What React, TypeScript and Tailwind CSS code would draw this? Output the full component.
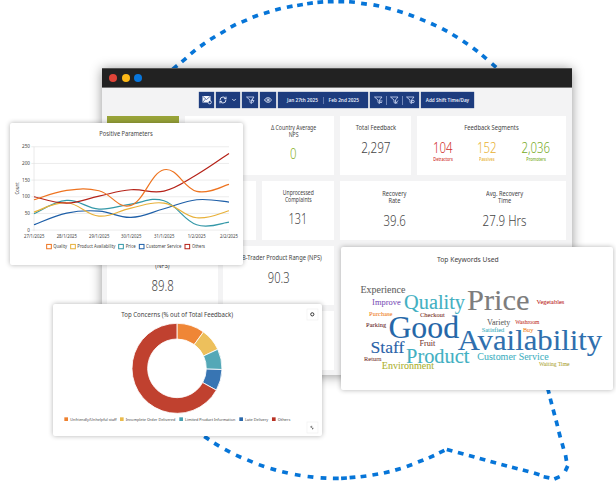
import React from "react";
import { ChevronDown, Eye, RefreshCw } from "lucide-react";

const SANS = "font-['Noto_Sans','Open_Sans',sans-serif]";

type Pt = [number, number];

const topArc: Pt[] = [
  [175, 67.3], [184, 60], [193, 52], [202.7, 44.7], [212.7, 38], [223, 32], [233.3, 25.8], [244.3, 21],
  [255.3, 16.3], [266.7, 12.7], [278, 9.3], [289.7, 6.7], [300, 5], [310, 3.3], [320.3, 2.1], [330.7, 1.7],
  [341.3, 1.7], [352, 2], [364, 3.7], [376.3, 5.4], [388, 8.3], [400, 11.6], [411.3, 15.4], [422.7, 20],
  [433.7, 24.7], [444.7, 30], [455, 36], [465.3, 42.7], [475.3, 49.7], [484.3, 57], [494, 65.5],
];

const bottomArc: Pt[] = [
  [206.7, 438], [216.7, 444.6], [227.5, 450.7], [238.6, 456.3], [250, 461], [261.5, 465.6], [273.3, 469.3],
  [285, 472.4], [297.7, 475], [310.5, 476.8], [323.5, 478], [335.8, 478.4], [344, 478.2], [352.5, 477.4], [363.5, 476.4],
  [375.3, 474.5], [386.7, 472.3], [398, 469.3], [409.5, 465.6], [420.7, 461], [431.5, 456.7], [441.8, 451.6],
];

const tail: Pt[] = [
  [449.6, 450.2], [460.7, 453.3], [471.7, 456.2], [482.5, 459.3], [493.3, 462.3], [504.2, 465.2], [514.8, 468],
  [525.6, 470.8], [536.7, 473.8], [546.5, 477.3], [557, 477.8], [566.5, 468.5], [566, 458], [562.8, 446],
  [559.6, 434.6], [556.8, 423.3], [553.9, 412.4], [551, 401.4], [548.4, 391],
];

function Dashes({ points }: { points: Pt[] }) {
  return (
    <g stroke="#0675d8" strokeWidth={3.7}>
      {points.map(([x, y], i) => {
        const a = points[Math.max(0, i - 1)];
        const b = points[Math.min(points.length - 1, i + 1)];
        const len = Math.hypot(b[0] - a[0], b[1] - a[1]);
        const dx = ((b[0] - a[0]) / len) * 2.9;
        const dy = ((b[1] - a[1]) / len) * 2.9;
        return <line key={i} x1={x - dx} y1={y - dy} x2={x + dx} y2={y + dy} />;
      })}
    </g>
  );
}

function Funnel({ children }: { children?: React.ReactNode }) {
  return (
    <svg viewBox="0 0 18 18" className="h-[9px] w-[9px]" fill="none" stroke="#dbe4ff" strokeWidth={1.5} strokeLinejoin="round">
      <path d="M1 2h15l-5 6v7l-3-2V8z" />
      {children}
    </svg>
  );
}

const btn = "flex h-[16px] shrink-0 items-center justify-center bg-[#1d3c7e] text-[#e6ecfa] shadow-[0_0_1px_#1d3c7e]";

function Toolbar() {
  return (
    <div className="flex h-[28px] items-start gap-[2px] pl-[97px] pt-[4px]">
      <div className={`${btn} w-[15px]`}>
        <svg viewBox="0 0 20 20" className="h-[10px] w-[10px]">
          <path d="M1 2h16v13H1z" fill="#f4f6fc" />
          <path d="M2 3l7 6 7-6M2 14l5-6" stroke="#1d3c7e" strokeWidth={1.3} fill="none" />
          <circle cx={15.5} cy={14.5} r={3.2} fill="#1d3c7e" stroke="#f4f6fc" strokeWidth={1.6} />
        </svg>
      </div>
      <div className={`${btn} w-[24px] gap-[4px]`}>
        <RefreshCw size={8} strokeWidth={2.8} />
        <ChevronDown size={6} strokeWidth={3.4} />
      </div>
      <div className={`${btn} w-[16px]`}>
        <Funnel><path d="M14 5l-2 4h4l-3 5" /></Funnel>
      </div>
      <div className={`${btn} w-[16px]`}><Eye size={8} strokeWidth={2.6} /></div>
      <div className={`${btn} w-[90px]`}>
        <div className="flex origin-center scale-x-[.82] items-center gap-[6px] whitespace-nowrap text-[5.8px] font-semibold">
          <span>Jan 27th 2025</span>
          <span className="h-[7px] w-px bg-[#7187b8]" />
          <span>Feb 2nd 2025</span>
        </div>
      </div>
      <div className={`${btn} w-[49px] gap-[3px]`}>
        <Funnel><path d="M12 10h5M12 13h4" /></Funnel>
        <span className="h-[9px] w-px bg-[#7187b8]" />
        <Funnel><path d="M12 14l4-5M12 14h3" /></Funnel>
        <span className="h-[9px] w-px bg-[#7187b8]" />
        <Funnel><circle cx={14} cy={11} r={2.5} /></Funnel>
      </div>
      <div className={`${btn} w-[53px]`}>
        <span className="scale-x-[.76] whitespace-nowrap text-[6.1px] font-semibold">Add Shift Time/Day</span>
      </div>
    </div>
  );
}

function Title({ children, className = "scale-x-[.9]" }: { children: React.ReactNode; className?: string }) {
  return <div className={`origin-center whitespace-nowrap text-center text-[6.3px] leading-[7.2px] text-[#444] ${className}`}>{children}</div>;
}

function Num({ children, className = "scale-x-[.76] text-[#444]" }: { children: React.ReactNode; className?: string }) {
  return <div className={`origin-center whitespace-nowrap text-center text-[15px] font-light leading-[16px] ${className}`}>{children}</div>;
}

function Segment({ value, label, className }: { value: string; label: string; className: string }) {
  return (
    <div className={`flex w-[40px] flex-col items-center ${className}`}>
      <Num className="scale-x-[.76]">{value}</Num>
      <div className="mt-[1px] scale-x-[.88] whitespace-nowrap text-[4.4px] font-medium leading-[6px]">{label}</div>
    </div>
  );
}

function BrowserWindow() {
  return (
    <div className="absolute left-[102px] top-[68px] h-[307px] w-[470px] bg-[#f3f3f4] shadow-[0_1px_11px_rgba(0,0,0,0.42)]">
      <div className="flex h-[20px] items-center gap-[4.6px] border-b border-t border-b-[#777] border-t-[#555] bg-[#222] pl-[7.3px]">
        <span className="h-[8px] w-[8px] rounded-full bg-[#e04438]" />
        <span className="h-[8px] w-[8px] rounded-full bg-[#fcb817]" />
        <span className="h-[8px] w-[8px] rounded-full bg-[#0876dc]" />
      </div>
      <Toolbar />
      <div className="flex flex-col gap-[6px] pl-[5px] pr-[6px]">
        <div className="flex h-[59px] gap-[6px]">
          <div className="w-[72px] bg-[#98a338]" />
          <div className="flex w-[149px] flex-col items-center bg-white pl-[68px] pt-[8px]">
            <Title className="scale-x-[.82]">Δ Country Average<br />NPS</Title>
            <Num className="mt-[7px] scale-x-[.76] text-[#86b01c]">0</Num>
          </div>
          <div className="flex w-[71px] flex-col items-center bg-white pt-[8px]">
            <Title className="scale-x-[.92]">Total Feedback</Title>
            <Num className="mt-[8px] scale-x-[.78] text-[#444]">2,297</Num>
          </div>
          <div className="w-[149px] bg-white pt-[8px]">
            <Title className="scale-x-[.92]">Feedback Segments</Title>
            <div className="mt-[8px] flex pl-[6px]">
              <Segment value="104" label="Detractors" className="text-[#cf2e2a]" />
              <div className="w-[4px]" />
              <Segment value="152" label="Passives" className="text-[#e8b030]" />
              <div className="w-[9px]" />
              <Segment value="2,036" label="Promoters" className="text-[#76aa25]" />
            </div>
          </div>
        </div>
        <div className="flex h-[59px] gap-[6px]">
          <div className="w-[149px] bg-white" />
          <div className="flex w-[72px] flex-col items-center bg-white pt-[8px]">
            <Title className="scale-x-[.8]">Unprocessed<br />Complaints</Title>
            <Num className="mt-[7px] scale-x-[.72] text-[#444]">131</Num>
          </div>
          <div className="flex w-[226px] bg-white pt-[9px]">
            <div className="flex w-[109px] flex-col items-center">
              <Title>Recovery<br />Rate</Title>
              <Num className="mt-[8px] scale-x-[.76] text-[#444]">39.6</Num>
            </div>
            <div className="flex w-[111px] flex-col items-center">
              <Title>Avg. Recovery<br />Time</Title>
              <Num className="mt-[8px] scale-x-[.77] text-[#444]">27.9 Hrs</Num>
            </div>
          </div>
        </div>
        <div className="flex h-[59px] gap-[5px]">
          <div className="flex w-[111px] flex-col items-center bg-white pt-[9px]">
            <Title>Trader Product Quality<br />(NPS)</Title>
            <Num className="mt-[8px] scale-x-[.76] text-[#444]">89.8</Num>
          </div>
          <div className="flex w-[111px] flex-col items-center bg-white pt-[8px]">
            <div className="pl-[7px]">
              <Title className="scale-x-[.91]">B-Trader Product Range (NPS)</Title>
            </div>
            <Num className="mt-[8px] scale-x-[.74] text-[#444]">90.3</Num>
          </div>
        </div>
        <div className="h-[59px] w-[227px] bg-white" />
      </div>
    </div>
  );
}

const panel = "absolute rounded-[2px] bg-white shadow-[0_0_5px_rgba(0,0,0,0.3)]";

const xs = [102, 200, 297, 393, 492, 590, 687];

const series = [
  { name: "Customer Service", color: "#1e5fa8", ys: [343, 308, 302, 321, 295, 268, 275] },
  { name: "Price", color: "#3498a8", ys: [310, 270, 296, 281, 271, 343, 335] },
  { name: "Product Availability", color: "#e8b13a", ys: [305, 277, 317, 293, 278, 322, 301] },
  { name: "Others", color: "#b52218", ys: [259, 278, 257, 238, 242, 193, 129] },
  { name: "Quality", color: "#ee7420", ys: [268, 240, 241, 285, 178, 243, 222] },
];

function smooth(ys: number[]) {
  const at = (i: number): Pt => {
    const k = Math.max(0, Math.min(xs.length - 1, i));
    return [xs[k], ys[k]];
  };
  let d = `M${xs[0]} ${ys[0]}`;
  for (let i = 0; i < xs.length - 1; i++) {
    const [p0, p1, p2, p3] = [at(i - 1), at(i), at(i + 1), at(i + 2)];
    const t = 0.2;
    d += ` C${p1[0] + (p2[0] - p0[0]) * t} ${p1[1] + (p2[1] - p0[1]) * t} ${p2[0] - (p3[0] - p1[0]) * t} ${p2[1] - (p3[1] - p1[1]) * t} ${p2[0]} ${p2[1]}`;
  }
  return d;
}

const lineLegend = [
  { x: 140, tx: 160, w: 41, label: "Quality", color: "#ee7420" },
  { x: 212, tx: 232, w: 114, label: "Product Availability", color: "#e8b13a" },
  { x: 356, tx: 377, w: 30, label: "Price", color: "#3498a8" },
  { x: 418, tx: 438, w: 106, label: "Customer Service", color: "#1e5fa8" },
  { x: 555, tx: 576, w: 39, label: "Others", color: "#b52218" },
];

function LineChart() {
  return (
    <div className={`${panel} left-[10px] top-[122.5px] h-[142.5px] w-[233px]`}>
      <svg viewBox="30 38 699 427" className={`h-full w-full ${SANS}`} fill="#444">
        <text x={298} y={78} fontSize={19} textLength={160} lengthAdjust="spacingAndGlyphs">Positive Parameters</text>
        {[250, 200, 150, 100, 50, 0].map((v, i) => (
          <g key={v}>
            <line x1={94} x2={687} y1={109 + i * 50} y2={109 + i * 50} stroke="#ececec" strokeWidth={3} />
            <text x={90} y={114 + i * 50} fontSize={14} textAnchor="end">{v}</text>
          </g>
        ))}
        <line x1={102} x2={102} y1={109} y2={362} stroke="#e0e0e0" strokeWidth={2} />
        <text transform="translate(56 252) rotate(-90)" fontSize={14} textLength={36} lengthAdjust="spacingAndGlyphs">Count</text>
        {["27/1/2025", "28/1/2025", "29/1/2025", "30/1/2025", "31/1/2025", "1/2/2025", "2/2/2025"].map((d, i) => (
          <text key={d} x={xs[i] - (i > 4 ? 27 : 30)} y={384} fontSize={13.5} textLength={i > 4 ? 54 : 61} lengthAdjust="spacingAndGlyphs">{d}</text>
        ))}
        {series.map((s) => (
          <path key={s.name} d={smooth(s.ys)} fill="none" stroke={s.color} strokeWidth={3.6} />
        ))}
        {lineLegend.map((l) => (
          <g key={l.label}>
            <rect x={l.x} y={402} width={14} height={13} fill="#fff" stroke={l.color} strokeWidth={3} />
            <text x={l.tx} y={413} fontSize={14.5} textLength={l.w} lengthAdjust="spacingAndGlyphs">{l.label}</text>
          </g>
        ))}
      </svg>
    </div>
  );
}

const slices = [
  { from: 0, to: 36, color: "#ef8636" },
  { from: 36, to: 65, color: "#edc05c" },
  { from: 65, to: 91.5, color: "#54a8b7" },
  { from: 91.5, to: 119, color: "#3875b3" },
  { from: 119, to: 360, color: "#c0412f" },
];

function arc(from: number, to: number) {
  const p = (deg: number, r: number) => {
    const a = (deg * Math.PI) / 180;
    return `${410 + r * Math.sin(a)} ${399 - r * Math.cos(a)}`;
  };
  const big = to - from > 180 ? 1 : 0;
  return `M${p(from, 135)} A135 135 0 ${big} 1 ${p(to, 135)} L${p(to, 88)} A88 88 0 ${big} 0 ${p(from, 88)}Z`;
}

const donutLegend = [
  { x: 72, tx: 90, w: 139, label: "Unfriendly/Unhelpful staff", color: "#ee8130" },
  { x: 239, tx: 256, w: 149, label: "Incomplete Order Delivered", color: "#eabb4c" },
  { x: 417, tx: 434, w: 151, label: "Limited Product Information", color: "#469fb0" },
  { x: 597, tx: 614, w: 70, label: "Late Delivery", color: "#2a68ab" },
  { x: 695, tx: 712, w: 38, label: "Others", color: "#b83224" },
];

function DonutChart() {
  return (
    <div className={`${panel} left-[52.7px] top-[303.7px] h-[132px] w-[269.3px]`}>
      <svg viewBox="38 206 808 396" className={`h-full w-full ${SANS}`} fill="#444">
        <text x={243} y={245} fontSize={20} textLength={335} lengthAdjust="spacingAndGlyphs">Top Concerns (% out of Total Feedback)</text>
        <rect x={800} y={221} width={33} height={33} fill="#fff" stroke="#f0f0f0" strokeWidth={2} />
        <circle cx={816} cy={237} r={4.8} fill="none" stroke="#333" strokeWidth={3} />
        {slices.map((s) => (
          <path key={s.from} d={arc(s.from, s.to)} fill={s.color} stroke="#fff" strokeWidth={2.5} />
        ))}
        {donutLegend.map((l) => (
          <g key={l.label}>
            <rect x={l.x} y={546} width={11} height={11} fill={l.color} />
            <text x={l.tx} y={556} fontSize={13} textLength={l.w} lengthAdjust="spacingAndGlyphs">{l.label}</text>
          </g>
        ))}
        <rect x={800} y={560} width={33} height={33} fill="#fff" stroke="#f0f0f0" strokeWidth={2} />
        <path d="M812 574l6 7M812 577v-4h4M818 577v4h-3" fill="none" stroke="#555" strokeWidth={2} />
      </svg>
    </div>
  );
}

const words: { t: string; x: number; y: number; w: number; s: number; c: string }[] = [
  { t: "Experience", x: 75, y: 172, w: 135, s: 29, c: "#5f5f5f" },
  { t: "Improve", x: 110, y: 209, w: 86, s: 24.5, c: "#7d52b8" },
  { t: "Quality", x: 206, y: 220, w: 183, s: 60, c: "#42b0c2" },
  { t: "Price", x: 395, y: 224, w: 188, s: 91, c: "#7d7d7d" },
  { t: "Vegetables", x: 604, y: 204, w: 83, s: 19.5, c: "#c02a2a" },
  { t: "Purchase", x: 101, y: 241, w: 70, s: 19, c: "#f0852c" },
  { t: "Checkout", x: 254, y: 245, w: 74, s: 19, c: "#7a3228" },
  { t: "Parking", x: 92, y: 273, w: 60, s: 19, c: "#6b2d2d" },
  { t: "Good", x: 159, y: 306, w: 212, s: 94, c: "#2567a8" },
  { t: "Variety", x: 455, y: 269, w: 70, s: 25, c: "#5f5f5f" },
  { t: "Washroom", x: 540, y: 265, w: 72, s: 18, c: "#c43a30" },
  { t: "Satisfied", x: 439, y: 290, w: 68, s: 19, c: "#42b0c2" },
  { t: "Buy", x: 563, y: 288, w: 31, s: 19, c: "#f0852c" },
  { t: "Availability", x: 367, y: 344, w: 434, s: 91, c: "#2f6fae" },
  { t: "Staff", x: 105, y: 353, w: 102, s: 52, c: "#2a62a8" },
  { t: "Fruit", x: 252, y: 332, w: 48, s: 23, c: "#7a3a34" },
  { t: "Product", x: 212, y: 381, w: 190, s: 60, c: "#42b0c2" },
  { t: "Customer Service", x: 426, y: 372, w: 214, s: 30, c: "#42b0c2" },
  { t: "Return", x: 86, y: 375, w: 52, s: 19, c: "#7a3a34" },
  { t: "Environment", x: 139, y: 401, w: 157, s: 30, c: "#acb02c" },
  { t: "Waiting Time", x: 611, y: 392, w: 92, s: 18, c: "#b0a83a" },
];

function KeywordCloud() {
  return (
    <div className={`${panel} left-[340.7px] top-[246.5px] h-[143.5px] w-[272px]`}>
      <svg viewBox="17 34 816 431" className="h-full w-full font-['Liberation_Serif',serif]">
        <text x={305} y={79} fontSize={20} textLength={185} lengthAdjust="spacingAndGlyphs" fill="#444" className={SANS}>Top Keywords Used</text>
        {words.map((w) => (
          <text key={w.t} x={w.x} y={w.y} fontSize={w.s} textLength={w.w} lengthAdjust="spacingAndGlyphs" fill={w.c} stroke={w.c} strokeWidth={w.s > 40 ? 0.3 : 0.2}>{w.t}</text>
        ))}
      </svg>
    </div>
  );
}

export default function App() {
  return (
    <div className={`relative h-[481px] w-[616px] overflow-hidden bg-white ${SANS}`}>
      <svg className="absolute inset-0" width={616} height={481} viewBox="0 0 616 481">
        <Dashes points={topArc} />
        <Dashes points={bottomArc} />
        <Dashes points={tail} />
      </svg>
      <BrowserWindow />
      <LineChart />
      <KeywordCloud />
      <DonutChart />
    </div>
  );
}
